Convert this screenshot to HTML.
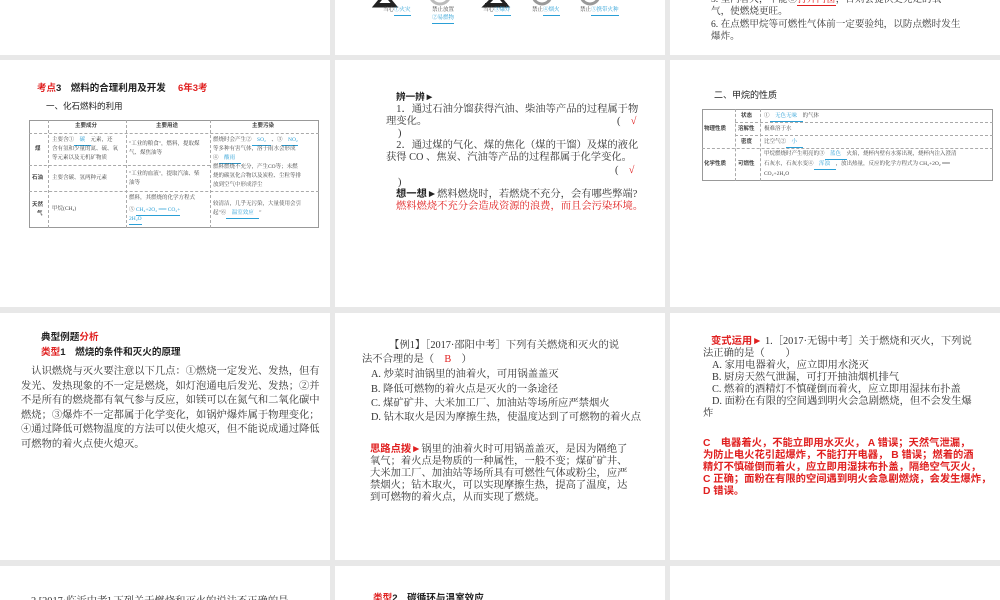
<!DOCTYPE html>
<html><head><meta charset="utf-8">
<style>
*{margin:0;padding:0;box-sizing:border-box}
body{width:1000px;height:600px;background:#e8e8e8;position:relative;overflow:hidden;font-family:"Liberation Serif","Noto Serif CJK SC","Noto Sans CJK SC",serif;color:#333}
.s{position:absolute;background:#fff;overflow:hidden}
.t{position:absolute;white-space:nowrap;font-size:10.3px;line-height:14.5px}
.b{font-family:"Liberation Sans","Noto Sans CJK SC",sans-serif;font-weight:bold;color:#222}
.r{color:#e02020}
.sm{font-size:5.5px;line-height:9px;color:#444}
.bl{color:#2a9fd6}
.cell{position:absolute;border:0.8px dashed #aaa}
.u{border-bottom:0.8px solid #2a9fd6;display:inline-block}
</style></head><body>
<!-- row1 -->
<div class="s" style="left:0;top:0;width:330px;height:55px"></div>
<div class="s" style="top:0;width:330px;height:55px;left:335px">
  <svg width="330" height="30" style="position:absolute;left:0;top:0">
    <path d="M50 -6 L60 6 L40 6 Z" fill="none" stroke="#222" stroke-width="3"/>
    <rect x="42" y="3" width="16" height="3" fill="#222"/>
    <circle cx="105" cy="-6" r="10" fill="none" stroke="#bbb" stroke-width="3"/>
    <path d="M162 -6 L172 6 L150 6 Z" fill="none" stroke="#222" stroke-width="3"/>
    <rect x="150" y="3" width="22" height="3" fill="#222"/>
    <circle cx="207" cy="-5" r="9" fill="none" stroke="#999" stroke-width="3"/>
    <circle cx="255" cy="-5" r="9" fill="none" stroke="#999" stroke-width="3"/>
  </svg>
  <div class="t sm" style="left:48px;top:6px">当心<span class="bl u">①火灾</span></div>
  <div class="t sm" style="left:97px;top:6px">禁止放置</div>
  <div class="t sm" style="left:97px;top:14px"><span class="bl u">②易燃物</span></div>
  <div class="t sm" style="left:148px;top:6px">当心<span class="bl u">③爆炸</span></div>
  <div class="t sm" style="left:197px;top:6px">禁止<span class="bl u">④烟火</span></div>
  <div class="t sm" style="left:245px;top:6px">禁止<span class="bl u">⑤携带火种</span></div>
</div>
<div class="s" style="left:670px;top:0;width:330px;height:55px">
  <div class="t" style="left:41px;top:-6px;font-size:9.6px;line-height:12px">5. 室内着火，不能⑥<span class="r" style="border-bottom:1px solid #e02020">打开门窗</span>，否则会提供更充足的氧</div>
  <div class="t" style="left:41px;top:6px;font-size:9.6px;line-height:12px">气，使燃烧更旺。</div>
  <div class="t" style="left:41px;top:19px;font-size:9.6px;line-height:12px">6. 在点燃甲烷等可燃性气体前一定要验纯，以防点燃时发生</div>
  <div class="t" style="left:41px;top:31px;font-size:9.6px;line-height:12px">爆炸。</div>
</div>
<!-- row2 -->
<div class="s" style="left:0;top:60px;width:330px;height:247px">
  <div class="t b" style="left:37px;top:22px;font-size:9.5px"><span class="r">考点</span>3　燃料的合理利用及开发　 <span class="r">6年3考</span></div>
  <div class="t b" style="left:46px;top:39px;font-size:8.5px;font-weight:normal">一、化石燃料的利用</div>
  <div style="position:absolute;left:29px;top:60px;width:290px;height:108px;border:1px solid #999"></div>
  <div class="cell" style="left:48px;top:60px;width:0;height:108px;border-width:0 0 0 0.8px"></div>
  <div class="cell" style="left:126px;top:60px;width:0;height:108px;border-width:0 0 0 0.8px"></div>
  <div class="cell" style="left:210px;top:60px;width:0;height:108px;border-width:0 0 0 0.8px"></div>
  <div class="cell" style="left:29px;top:73px;width:290px;height:0;border-width:0.8px 0 0 0"></div>
  <div class="cell" style="left:29px;top:105px;width:181px;height:0;border-width:0.8px 0 0 0"></div>
  <div class="cell" style="left:29px;top:131px;width:290px;height:0;border-width:0.8px 0 0 0"></div>
  <div class="t b sm" style="left:75px;top:62px">主要成分</div>
  <div class="t b sm" style="left:156px;top:62px">主要用途</div>
  <div class="t b sm" style="left:252px;top:62px">主要污染</div>
  <div class="t b sm" style="left:35px;top:85px">煤</div>
  <div class="t b sm" style="left:32px;top:114px">石油</div>
  <div class="t b sm" style="left:32px;top:141px">天然</div>
  <div class="t b sm" style="left:37px;top:150px">气</div>
  <div class="t sm" style="left:52px;top:76px">主要含①<span class="u bl">　碳　</span>元素，还</div>
  <div class="t sm" style="left:52px;top:85px">含有氢和少量的氮、硫、氧</div>
  <div class="t sm" style="left:52px;top:94px">等元素以及无机矿物质</div>
  <div class="t sm" style="left:52px;top:114px">主要含碳、氢两种元素</div>
  <div class="t sm" style="left:52px;top:145px">甲烷(CH₄)</div>
  <div class="t sm" style="left:129px;top:80px">"工业的粮食"，燃料，提取煤</div>
  <div class="t sm" style="left:129px;top:89px">气、煤焦油等</div>
  <div class="t sm" style="left:129px;top:110px">"工业的血液"，提取汽油、柴</div>
  <div class="t sm" style="left:129px;top:119px">油等</div>
  <div class="t sm" style="left:129px;top:134px">燃料，其燃烧的化学方程式</div>
  <div class="t sm" style="left:129px;top:146px">⑤ <span class="u bl">CH₄+2O₂ ══ CO₂+</span></div>
  <div class="t sm" style="left:129px;top:155px"><span class="u bl">2H₂O</span></div>
  <div class="t sm" style="left:213px;top:76px">燃烧时会产生②<span class="u bl">　SO₂　</span>、③<span class="u bl">　NO₂</span></div>
  <div class="t sm" style="left:213px;top:85px">等多种有害气体，溶于雨水会形成</div>
  <div class="t sm" style="left:213px;top:94px">④<span class="u bl">　酸雨　</span></div>
  <div class="t sm" style="left:213px;top:103px">燃料燃烧不充分，产生CO等；未燃</div>
  <div class="t sm" style="left:213px;top:112px">烧的碳氢化合物以及炭粒、尘粒等排</div>
  <div class="t sm" style="left:213px;top:121px">放到空气中形成浮尘</div>
  <div class="t sm" style="left:213px;top:140px">较清洁，几乎无污染，大量使用会引</div>
  <div class="t sm" style="left:213px;top:149px">起"⑥<span class="u bl">　温室效应　</span>"</div>
</div>
<div class="s" style="left:335px;top:60px;width:330px;height:247px">
  <div class="t b" style="left:61px;top:31px;font-size:9.6px">辨一辨►</div>
  <div class="t" style="left:51px;top:43px">　1．通过石油分馏获得汽油、柴油等产品的过程属于物</div>
  <div class="t" style="left:51px;top:55px">理变化。</div>
  <div class="t" style="left:282px;top:55px">(　<span class="r">√</span></div>
  <div class="t" style="left:63px;top:67px">)</div>
  <div class="t" style="left:51px;top:79px">　2．通过煤的气化、煤的焦化（煤的干馏）及煤的液化</div>
  <div class="t" style="left:51px;top:91px">获得 CO 、焦炭、汽油等产品的过程都属于化学变化。</div>
  <div class="t" style="left:280px;top:104px">(　<span class="r">√</span></div>
  <div class="t" style="left:63px;top:116px">)</div>
  <div class="t" style="left:61px;top:128px"><span class="b">想一想►</span>燃料燃烧时，若燃烧不充分，会有哪些弊端?</div>
  <div class="t r" style="left:61px;top:140px">燃料燃烧不充分会造成资源的浪费，而且会污染环境。</div>
</div>
<div class="s" style="left:670px;top:60px;width:330px;height:247px">
  <div class="t b" style="left:44px;top:28px;font-size:9px;font-weight:normal">二、甲烷的性质</div>
  <div style="position:absolute;left:32px;top:49px;width:291px;height:72px;border:1px solid #999"></div>
  <div class="cell" style="left:65px;top:49px;width:0;height:72px;border-width:0 0 0 0.8px"></div>
  <div class="cell" style="left:90px;top:49px;width:0;height:72px;border-width:0 0 0 0.8px"></div>
  <div class="cell" style="left:65px;top:62px;width:258px;height:0;border-width:0.8px 0 0 0"></div>
  <div class="cell" style="left:65px;top:75px;width:258px;height:0;border-width:0.8px 0 0 0"></div>
  <div class="cell" style="left:32px;top:88px;width:291px;height:0;border-width:0.8px 0 0 0"></div>
  <div class="t b sm" style="left:34px;top:65px">物理性质</div>
  <div class="t b sm" style="left:34px;top:100px">化学性质</div>
  <div class="t b sm" style="left:71px;top:52px">状态</div>
  <div class="t b sm" style="left:68px;top:65px">溶解性</div>
  <div class="t b sm" style="left:71px;top:78px">密度</div>
  <div class="t b sm" style="left:68px;top:100px">可燃性</div>
  <div class="t sm" style="left:94px;top:52px">①<span class="u bl">　无色无味　</span>的气体</div>
  <div class="t sm" style="left:94px;top:65px">极难溶于水</div>
  <div class="t sm" style="left:94px;top:78px">比空气②<span class="u bl">　小　</span></div>
  <div class="t sm" style="left:94px;top:90px">甲烷燃烧时产生明亮的③<span class="u bl">　蓝色　</span>火焰，烧杯内壁有水雾出现，烧杯内注入澄清</div>
  <div class="t sm" style="left:94px;top:100px">石灰水，石灰水变④<span class="u bl">　浑浊　</span>，放出热量，反应的化学方程式为 CH₄+2O₂ ══</div>
  <div class="t sm" style="left:94px;top:110px">CO₂+2H₂O</div>
</div>
<!-- row3 -->
<div class="s" style="left:0;top:313px;width:330px;height:247px">
  <div class="t b" style="left:41px;top:18px;font-size:9.6px">典型例题<span class="r">分析</span></div>
  <div class="t b" style="left:41px;top:33px;font-size:9.6px"><span class="r">类型</span>1　燃烧的条件和灭火的原理</div>
  <div class="t" style="left:21px;top:52px">　认识燃烧与灭火要注意以下几点：①燃烧一定发光、发热，但有</div>
  <div class="t" style="left:21px;top:66.5px">发光、发热现象的不一定是燃烧，如灯泡通电后发光、发热；②并</div>
  <div class="t" style="left:21px;top:81px">不是所有的燃烧都有氧气参与反应，如镁可以在氮气和二氧化碳中</div>
  <div class="t" style="left:21px;top:95.5px">燃烧；③爆炸不一定都属于化学变化，如锅炉爆炸属于物理变化；</div>
  <div class="t" style="left:21px;top:110px">④通过降低可燃物温度的方法可以使火熄灭，但不能说成通过降低</div>
  <div class="t" style="left:21px;top:124.5px">可燃物的着火点使火熄灭。</div>
</div>
<div class="s" style="left:335px;top:313px;width:330px;height:247px">
  <div class="t" style="left:49px;top:26px">　【例1】［2017·邵阳中考］下列有关燃烧和灭火的说</div>
  <div class="t" style="left:27px;top:40px">法不合理的是（　<span class="r">B</span>　）</div>
  <div class="t" style="left:36px;top:55px">A. 炒菜时油锅里的油着火，可用锅盖盖灭</div>
  <div class="t" style="left:36px;top:70px">B. 降低可燃物的着火点是灭火的一条途径</div>
  <div class="t" style="left:36px;top:84px">C. 煤矿矿井、大米加工厂、加油站等场所应严禁烟火</div>
  <div class="t" style="left:36px;top:98px">D. 钻木取火是因为摩擦生热，使温度达到了可燃物的着火点</div>
  <div class="t" style="left:35px;top:130px"><span class="r b">思路点拨►</span>锅里的油着火时可用锅盖盖灭，是因为隔绝了</div>
  <div class="t" style="left:35px;top:142px">氧气；着火点是物质的一种属性，一般不变；煤矿矿井、</div>
  <div class="t" style="left:35px;top:154px">大米加工厂、加油站等场所具有可燃性气体或粉尘，应严</div>
  <div class="t" style="left:35px;top:166px">禁烟火；钻木取火，可以实现摩擦生热，提高了温度，达</div>
  <div class="t" style="left:35px;top:178px">到可燃物的着火点，从而实现了燃烧。</div>
</div>
<div class="s" style="left:670px;top:313px;width:330px;height:247px">
  <div class="t" style="left:41px;top:22px"><span class="r b">变式运用►</span> 1.［2017·无锡中考］关于燃烧和灭火，下列说</div>
  <div class="t" style="left:33px;top:34px">法正确的是（　　）</div>
  <div class="t" style="left:42px;top:46px">A. 家用电器着火，应立即用水浇灭</div>
  <div class="t" style="left:42px;top:58px">B. 厨房天然气泄漏，可打开抽油烟机排气</div>
  <div class="t" style="left:42px;top:70px">C. 燃着的酒精灯不慎碰倒而着火，应立即用湿抹布扑盖</div>
  <div class="t" style="left:42px;top:82px">D. 面粉在有限的空间遇到明火会急剧燃烧，但不会发生爆</div>
  <div class="t" style="left:33px;top:94px">炸</div>
  <div class="t r b" style="left:33px;top:124px">C　电器着火，不能立即用水灭火， A 错误；天然气泄漏，</div>
  <div class="t r b" style="left:33px;top:136px">为防止电火花引起爆炸，不能打开电器， B 错误；燃着的酒</div>
  <div class="t r b" style="left:33px;top:148px">精灯不慎碰倒而着火，应立即用湿抹布扑盖，隔绝空气灭火，</div>
  <div class="t r b" style="left:33px;top:160px">C 正确；面粉在有限的空间遇到明火会急剧燃烧，会发生爆炸，</div>
  <div class="t r b" style="left:33px;top:172px">D 错误。</div>
</div>
<!-- row4 -->
<div class="s" style="left:0;top:566px;width:330px;height:34px">
  <div class="t" style="left:31px;top:29px;color:#333">2.[2017·临沂中考] 下列关于燃烧和灭火的说法不正确的是</div>
</div>
<div class="s" style="left:335px;top:566px;width:330px;height:34px">
  <div class="t b" style="left:38px;top:26px;font-size:9.6px"><span class="r">类型</span>2　碳循环与温室效应</div>
</div>
<div class="s" style="left:670px;top:566px;width:330px;height:34px"></div>
</body></html>
